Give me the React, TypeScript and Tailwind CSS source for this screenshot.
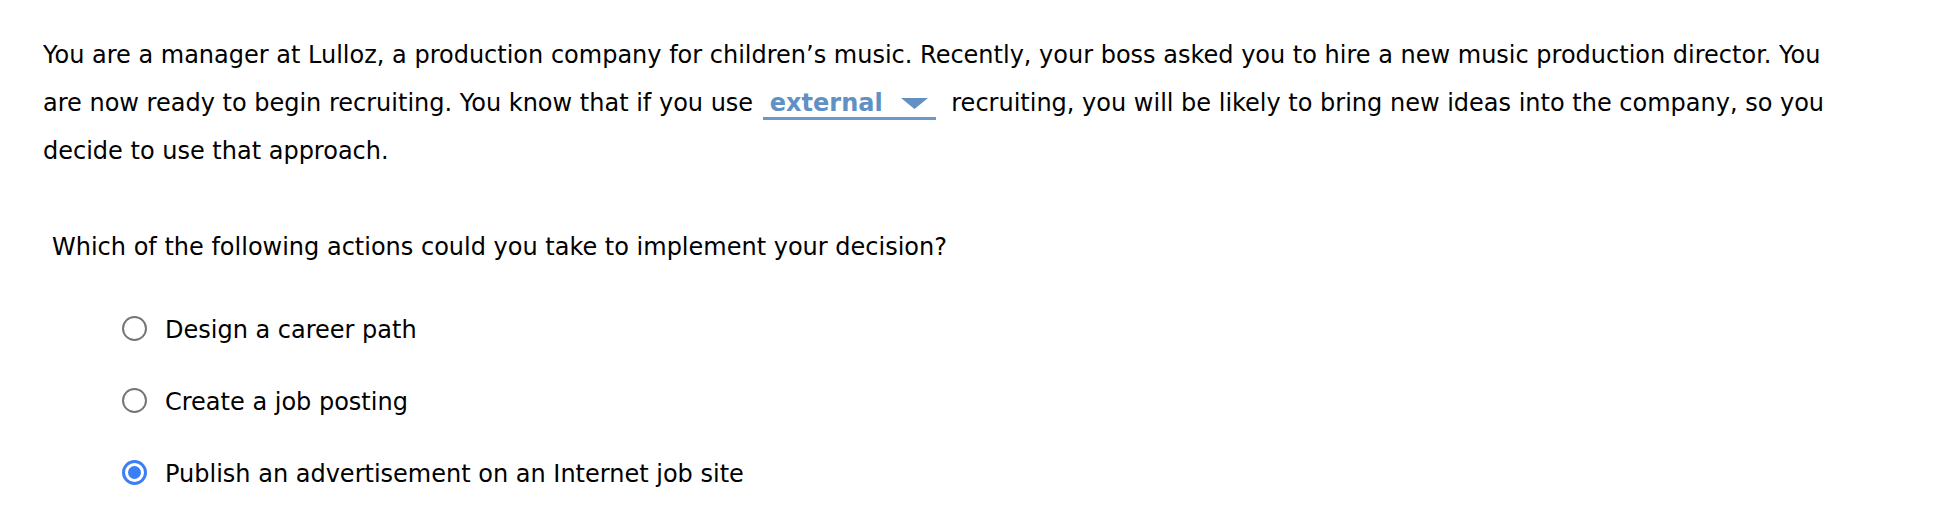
export default function App() {
  const options = [
    { label: "Design a career path", checked: false },
    { label: "Create a job posting", checked: false },
    { label: "Publish an advertisement on an Internet job site", checked: true },
  ];

  return (
    <main className="min-h-screen bg-white px-[43px] pt-[31px] text-[24px] leading-[48px] text-black font-['DejaVu_Sans',Verdana,sans-serif]">
      <p className="w-[1810px]">
        You are a manager at Lulloz, a production company for children’s music. Recently, your boss asked you to hire a
        new music production director. You are now ready to begin recruiting. You know that if you use{" "}
        <span className="ml-[2px] mr-[8px] inline-block border-b-[3px] border-[#6a98c8] pl-[7px] pr-[8px] font-bold leading-[28px] text-[#6190c2]">
          external
          <svg className="mb-[2px] ml-[18px] inline-block" width="27" height="11" viewBox="0 0 27 11">
            <path d="M0 0H27L13.5 11Z" fill="currentColor" />
          </svg>
        </span>{" "}
        recruiting, you will be likely to bring new ideas into the company, so you decide to use that approach.
      </p>

      <p className="mt-[48px] pl-[9px]">Which of the following actions could you take to implement your decision?</p>

      <ul className="mt-[21px] pl-[79px]">
        {options.map((o) => (
          <li key={o.label} className="flex h-[72px] items-center gap-[18px]">
            {o.checked ? (
              <span className="flex h-[25px] w-[25px] items-center justify-center rounded-full border-[3px] border-[#3a7ff6] p-[3px]">
                <span className="h-full w-full rounded-full bg-[#3a7ff6]" />
              </span>
            ) : (
              <span className="h-[25px] w-[25px] rounded-full border-2 border-[#767676]" />
            )}
            <span className="pt-[3px] leading-[24px]">{o.label}</span>
          </li>
        ))}
      </ul>
    </main>
  );
}
